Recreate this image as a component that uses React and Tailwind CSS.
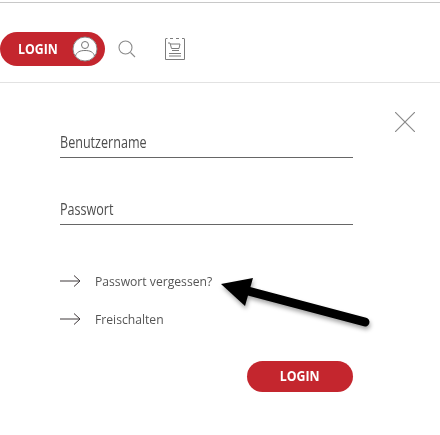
import React from "react";

function UserIcon() {
  return (
    <svg width="26" height="26" viewBox="0 0 26 26" fill="none">
      <circle cx="13" cy="13" r="12" fill="#fff" stroke="#8a8a8a" strokeWidth="1" />
      <circle cx="13" cy="9" r="3.500" fill="none" stroke="#777" strokeWidth="1" />
      <path d="M3.500 20c1-4 4.500-5.500 9.500-5.500s8.500 1.500 9.500 5.500" fill="none" stroke="#777" strokeWidth="1" />
    </svg>
  );
}

function SearchIcon() {
  return (
    <svg width="20" height="20" viewBox="0 0 20 20" fill="none" stroke="#8a8a8a" strokeWidth="1.1">
      <circle cx="8.500" cy="8.500" r="6.500" />
      <path d="M13.500 13.500L18 18" />
    </svg>
  );
}

function CartIcon() {
  return (
    <svg width="20" height="22" viewBox="0 0 20 22" fill="none" stroke="#7c7c7c" strokeWidth="1">
      <path d="M.5 1v20.500h19V1" />
      <path d="M.5.5h2M5 .5h3M11 .5h3M17 .5h2.500" />
      <path d="M3 5h2l1.500 5.500h7.500l1-4.500H5.500" />
      <path d="M7 12.500h7" />
      <path d="M4 15.500h12M4 18h12" />
    </svg>
  );
}

function ArrowRight() {
  return (
    <svg width="21" height="12" viewBox="0 0 21 12" fill="none" stroke="#3f383b" strokeWidth="1">
      <path d="M0 6h20M14 .5L20 6l-6 5.500" />
    </svg>
  );
}

function Field({ label }) {
  return (
    <div className="border-b border-[#666] h-[27px] text-[17px] leading-[21px] text-[#4d4d4d]">
      <span className="inline-block origin-left scale-x-[0.74]">{label}</span>
    </div>
  );
}

function LinkRow({ label, className }) {
  return (
    <div className={`flex items-center h-[20px] gap-[14px] text-[13.500px] text-[#555] ${className}`}>
      <ArrowRight />
      <span className="inline-block origin-left scale-x-[0.9]">{label}</span>
    </div>
  );
}

export default function App() {
  return (
    <div className="relative w-[440px] h-[435px] bg-white overflow-hidden font-['Open_Sans',sans-serif]">
      <div className="mt-[2px] h-[1px] bg-[#c8c8c8]" />

      {/* Header */}
      <div className="h-[80px] border-b border-[#e2e2e2] flex items-center pt-[12px]">
        <button className="w-[105px] h-[34px] rounded-full bg-[#c4262e] flex items-center justify-between pl-[18px] pr-[7px] text-white text-[14px] font-bold">
          <span className="inline-block origin-left scale-x-[0.88]">LOGIN</span>
          <UserIcon />
        </button>
        <div className="ml-[12px]"><SearchIcon /></div>
        <div className="ml-[28px]"><CartIcon /></div>
      </div>

      {/* Close */}
      <svg className="absolute left-[395px] top-[112px]" width="20" height="20" viewBox="0 0 20 20" stroke="#8a8a8a" strokeWidth="1.2">
        <path d="M0 0l20 20M20 0L0 20" />
      </svg>

      {/* Form */}
      <div className="ml-[60px] w-[293px] flex flex-col pt-[48px]">
        <Field label="Benutzername" />
        <div className="mt-[40px]"><Field label="Passwort" /></div>

        <LinkRow label="Passwort vergessen?" className="mt-[46px]" />
        <LinkRow label="Freischalten" className="mt-[18px]" />

        <button className="mt-[32px] self-end w-[106px] h-[31px] pb-[2px] rounded-full bg-[#c4262e] text-white text-[14px] font-bold">
          <span className="inline-block scale-x-[0.88]">LOGIN</span>
        </button>
      </div>

      {/* Annotation arrow */}
      <svg className="absolute left-0 top-0 pointer-events-none" width="440" height="435" fill="none">
        <defs>
          <filter id="arrowShadow" x="-20%" y="-50%" width="140%" height="200%">
            <feDropShadow dx="1" dy="3" stdDeviation="2" floodColor="#000" floodOpacity="0.35" />
          </filter>
        </defs>
        <g filter="url(#arrowShadow)">
          <path d="M248 291L365 322" stroke="#000" strokeWidth="9" strokeLinecap="round" />
          <path d="M221 284L253 278L245 306Z" fill="#000" />
        </g>
      </svg>
    </div>
  );
}
